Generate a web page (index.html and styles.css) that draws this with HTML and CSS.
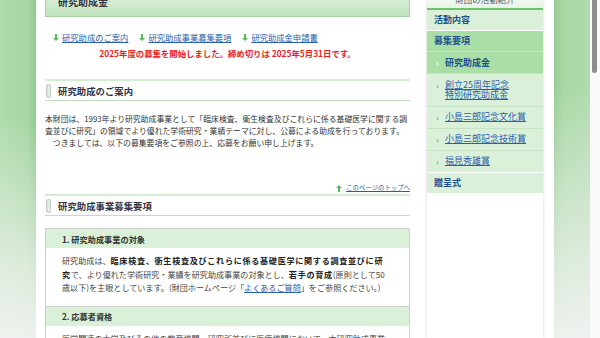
FILE: index.html
```html
<!DOCTYPE html>
<html lang="ja">
<head>
    <meta charset="UTF-8">
    <meta name="viewport" content="width=device-width, initial-scale=1.0">
    <title>研究助成金</title>
    <link rel="stylesheet" href="styles.css">
</head>
<body>
    <div class="window">
        <div class="strip strip-left"></div>

        <div class="page">
            <div class="main">
                <div class="title-box">研究助成金</div>

                <ul class="anchors">
                    <li><span class="arrow-down"></span><a href="#guide">研究助成のご案内</a></li>
                    <li><span class="arrow-down"></span><a href="#youkou">研究助成事業募集要項</a></li>
                    <li><span class="arrow-down"></span><a href="#form">研究助成金申請書</a></li>
                </ul>
                <p class="notice">2025年度の募集を開始しました。締め切りは 2025年5月31日です。</p>

                <!-- 研究助成のご案内 -->
                <h2 class="sec-head" id="guide"><span class="mark"></span>研究助成のご案内</h2>
                <p class="lead">本財団は、1993年より研究助成事業として「臨床検査、衛生検査及びこれらに係る基礎医学に関する調査並びに研究」の領域でより優れた学術研究・業績テーマに対し、公募による助成を行っております。<br>　つきましては、以下の募集要項をご参照の上、応募をお願い申し上げます。</p>

                <div class="pagetop"><span class="arrow-up"></span><a href="#">このページのトップへ</a></div>

                <!-- 募集要項 -->
                <h2 class="sec-head" id="youkou"><span class="mark"></span>研究助成事業募集要項</h2>
                <table class="guide">
                    <tr><th>1. 研究助成事業の対象</th></tr>
                    <tr><td>研究助成は、<strong>臨床検査、衛生検査及びこれらに係る基礎医学に関する調査並びに研究</strong>で、より優れた学術研究・業績を研究助成事業の対象とし、<strong>若手の育成</strong>(原則として50歳以下)を主眼としています。(財団ホームページ「<a href="#">よくあるご質問</a>」をご参照ください。)</td></tr>
                    <tr><th>2. 応募者資格</th></tr>
                    <tr><td>医学関連の大学及びその他の教育機関、研究所並びに医療機関において、本研究助成事業の対象となる研究を行う者。</td></tr>
                </table>
            </div>

            <div class="side">
                <div class="side-title">財団の活動紹介</div>
                <ul class="side-menu">
                    <li class="top">活動内容</li>
                    <li class="top on">募集要項</li>
                    <li class="sub on"><span class="chev">›</span>研究助成金</li>
                    <li class="sub two"><span class="chev">›</span><a href="#">創立25周年記念<br>特別研究助成金</a></li>
                    <li class="sub"><span class="chev">›</span><a href="#">小島三郎記念文化賞</a></li>
                    <li class="sub"><span class="chev">›</span><a href="#">小島三郎記念技術賞</a></li>
                    <li class="sub"><span class="chev">›</span><a href="#">福見秀雄賞</a></li>
                    <li class="top">贈呈式</li>
                </ul>
            </div>
        </div>

        <div class="strip strip-right"></div>
        <div class="scrollbar"><div class="thumb"></div></div>
    </div>
</body>
</html>
```

FILE: styles.css
```css
body {
    margin: 0;
    font-family: "Noto Sans CJK JP", "Noto Sans", sans-serif;
    color: #333;
}
a {
    color: #2a5db0;
}
.window {
    display: flex;
    width: 600px;
    height: 338px;
    overflow: hidden;
}
.strip {
    width: 36px;
    flex: none;
}
.strip-left {
    background:
        linear-gradient(to bottom, rgba(240,242,240,0) 35%, rgba(240,242,240,0.75) 80%, rgba(242,243,242,0.95) 100%),
        linear-gradient(to right, #b1dcae 0, #a7d6a3 75%, #93c991 100%);
}
.strip-right {
    background:
        linear-gradient(to bottom, rgba(240,242,240,0) 25%, rgba(240,242,240,0.7) 75%, rgba(242,243,242,0.95) 100%),
        linear-gradient(to right, #98cc95 0, #a8d7a4 25%, #b0dbad 100%);
}
.scrollbar {
    width: 10px;
    flex: none;
    background: #fafafa;
}
.thumb {
    width: 5px;
    height: 73px;
    margin-left: 2px;
    background: #8e8e8e;
    border-radius: 0 0 3px 3px;
}

/* page */
.page {
    width: 518px;
    flex: none;
    background: #fff;
    display: flex;
    padding-left: 9px;
    gap: 17px;
    box-sizing: border-box;
}
.main {
    width: 365px;
    flex: none;
}
.title-box {
    height: 28px;
    margin-top: -11px;
    box-sizing: border-box;
    padding: 6px 12px 0;
    border: 1px solid #a6d3a3;
    background: linear-gradient(to bottom, #e4f4e3, #bfe3bc);
    font-size: 10px;
    line-height: 12px;
    font-weight: bold;
    color: #334;
}
.anchors {
    list-style: none;
    margin: 14px 0 0;
    padding: 0 0 0 8px;
    display: flex;
    gap: 11px;
    font-size: 8.3px;
    line-height: 12px;
}
.anchors li {
    display: flex;
    align-items: center;
    gap: 3px;
}
.arrow-down, .arrow-up {
    width: 6px;
    height: 7px;
    display: inline-block;
    position: relative;
}
.arrow-down::before, .arrow-up::before {
    content: "";
    position: absolute;
    left: 2px;
    width: 2px;
    height: 5px;
    background: #5cb85c;
}
.arrow-down::before { top: 0; }
.arrow-up::before { bottom: 0; }
.arrow-down::after, .arrow-up::after {
    content: "";
    position: absolute;
    left: 0;
    border-left: 3px solid transparent;
    border-right: 3px solid transparent;
}
.arrow-down::after {
    bottom: 0;
    border-top: 3px solid #5cb85c;
}
.arrow-up::after {
    top: 0;
    border-bottom: 3px solid #5cb85c;
}
.notice {
    margin: 4px 0 0;
    text-align: center;
    color: #ee1c24;
    font-weight: bold;
    font-size: 8.4px;
    line-height: 12px;
}
.sec-head {
    margin: 20px 0 0;
    height: 22px;
    box-sizing: border-box;
    border-top: 2px solid #d3edd2;
    border-bottom: 1px solid #bde2bb;
    display: flex;
    align-items: center;
    padding-left: 13px;
    position: relative;
    font-size: 9.4px;
    font-weight: bold;
    color: #334;
}
.mark {
    position: absolute;
    left: 1px;
    top: 3px;
    width: 3px;
    height: 12px;
    border: 1px solid #c8c8c8;
    border-radius: 2px;
    background: linear-gradient(to right, #c7e8c4, #f2f2f2);
}
.lead {
    margin: 12px 0 0;
    font-size: 7.85px;
    line-height: 12px;
}
.pagetop {
    margin-top: 33px;
    display: flex;
    justify-content: flex-end;
    align-items: center;
    gap: 4px;
    font-size: 6.4px;
    line-height: 12px;
}
.sec-head + .guide {
    margin-top: 12px;
}
.pagetop + .sec-head {
    margin-top: 0;
}
.guide {
    width: 100%;
    border-collapse: collapse;
    border: 1px solid #cfcfcf;
    font-size: 8.1px;
}
.guide th {
    text-align: left;
    background: #daf0d8;
    border-top: 1px solid #cfcfcf;
    padding: 0 0 0 16px;
    height: 19px;
    font-size: 8.2px;
    color: #333;
}
.guide td {
    padding: 6px 21px 11px 16px;
    line-height: 13.5px;
    color: #444;
}
.guide td strong {
    color: #222;
    letter-spacing: 0.7px;
}

/* side menu */
.side {
    width: 116px;
    flex: none;
    background: #fff;
    box-shadow: 0 0 3px rgba(0,0,0,0.18);
}
.side-title {
    height: 22px;
    margin-top: -12px;
    box-sizing: border-box;
    padding-top: 6px;
    text-align: center;
    font-size: 8.5px;
    line-height: 10px;
    color: #556;
    background: linear-gradient(to bottom, #fff, #e6f4e5);
    border-bottom: 2px solid #6cc36a;
}
.side-menu {
    list-style: none;
    margin: 0;
    padding: 0;
    font-size: 9px;
}
.side-menu li {
    border-top: 1px solid #fff;
    background: #daf0d9;
    color: #1d4f8f;
    line-height: 12px;
}
.side-menu li:first-child {
    border-top: 0;
}
.side-menu .top {
    padding: 4px 7px;
    font-weight: bold;
}
.side-menu .sub {
    display: flex;
    padding: 5px 7px 4px 9px;
    border-top-color: #c4e3c3;
}
.side-menu .sub.two {
    padding: 6px 7px 6px 9px;
}
.side-menu .sub a {
    color: #2a5db0;
    line-height: 10px;
}
.side-menu .on {
    background: #a9dfa7;
}
.side-menu .sub.on {
    font-weight: bold;
    border-top-color: #c2ebc0;
}
.chev {
    width: 9px;
    flex: none;
    color: #5cb85c;
    font-weight: bold;
    font-size: 8px;
}
.side-menu .on .chev {
    color: #fff;
}
```
